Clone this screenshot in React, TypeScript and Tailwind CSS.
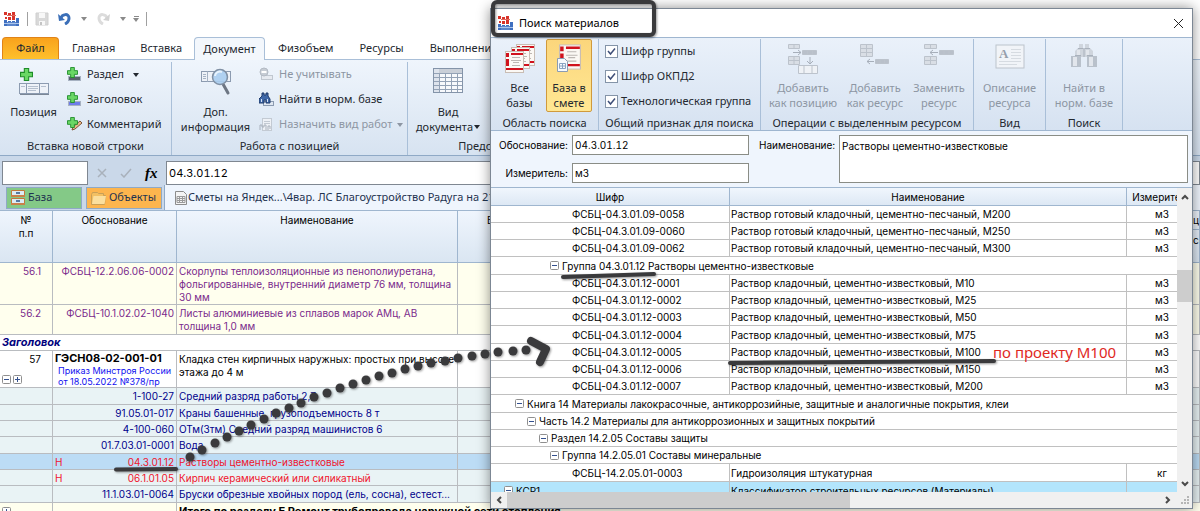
import type { ReactNode } from "react";
import { clsx } from "clsx";

type EstimateRow = {
  num?: string;
  mark?: string;
  code?: string;
  name: string;
  tone: string;
  height: string;
};

const accessoryRows: EstimateRow[] = [
  {
    num: "56.1",
    code: "ФСБЦ-12.2.06.06-0002",
    name: "Скорлупы теплоизоляционные из пенополиуретана, фольгированные, внутренний диаметр 76 мм, толщина 30 мм",
    tone: "bg-[#ffffee] text-[#7a2a8c]",
    height: "h-[42px]",
  },
  {
    num: "56.2",
    code: "ФСБЦ-10.1.02.02-1040",
    name: "Листы алюминиевые из сплавов марок АМц, АВ толщина 1,0 мм",
    tone: "bg-[#ffffee] text-[#7a2a8c]",
    height: "h-[30px]",
  },
];

const resourceTone = "bg-[#e9f3f5] text-[#00008b]";

const resourceRows: EstimateRow[] = [
  { code: "1-100-27", name: "Средний разряд работы 2,7", tone: resourceTone, height: "h-[17px]" },
  { code: "91.05.01-017", name: "Краны башенные, грузоподъемность 8 т", tone: resourceTone, height: "h-4" },
  { code: "4-100-060", name: "ОТм(Зтм) Средний разряд машинистов 6", tone: resourceTone, height: "h-4" },
  { code: "01.7.03.01-0001", name: "Вода", tone: resourceTone, height: "h-[17px]" },
  { mark: "Н", code: "04.3.01.12", name: "Растворы цементно-известковые", tone: "bg-[#bcdcf5] text-[#f0142c]", height: "h-4" },
  { mark: "Н", code: "06.1.01.05", name: "Кирпич керамический или силикатный", tone: "bg-[#e9f3f5] text-[#f0142c]", height: "h-4" },
  { code: "11.1.03.01-0064", name: "Бруски обрезные хвойных пород (ель, сосна), естест...", tone: resourceTone, height: "h-[17px]" },
];

type MaterialRow =
  | { kind: "item"; code: string; name: string; unit: string }
  | { kind: "group"; indent: string; text: string };

const materialRows: MaterialRow[] = [
  { kind: "item", code: "ФСБЦ-04.3.01.09-0058", name: "Раствор готовый кладочный, цементно-песчаный, М200", unit: "м3" },
  { kind: "item", code: "ФСБЦ-04.3.01.09-0060", name: "Раствор готовый кладочный, цементно-песчаный, М250", unit: "м3" },
  { kind: "item", code: "ФСБЦ-04.3.01.09-0062", name: "Раствор готовый кладочный, цементно-песчаный, М300", unit: "м3" },
  { kind: "group", indent: "pl-[59px]", text: "Группа 04.3.01.12 Растворы цементно-известковые" },
  { kind: "item", code: "ФСБЦ-04.3.01.12-0001", name: "Раствор кладочный, цементно-известковый, М10", unit: "м3" },
  { kind: "item", code: "ФСБЦ-04.3.01.12-0002", name: "Раствор кладочный, цементно-известковый, М25", unit: "м3" },
  { kind: "item", code: "ФСБЦ-04.3.01.12-0003", name: "Раствор кладочный, цементно-известковый, М50", unit: "м3" },
  { kind: "item", code: "ФСБЦ-04.3.01.12-0004", name: "Раствор кладочный, цементно-известковый, М75", unit: "м3" },
  { kind: "item", code: "ФСБЦ-04.3.01.12-0005", name: "Раствор кладочный, цементно-известковый, М100", unit: "м3" },
  { kind: "item", code: "ФСБЦ-04.3.01.12-0006", name: "Раствор кладочный, цементно-известковый, М150", unit: "м3" },
  { kind: "item", code: "ФСБЦ-04.3.01.12-0007", name: "Раствор кладочный, цементно-известковый, М200", unit: "м3" },
  { kind: "group", indent: "pl-6", text: "Книга 14 Материалы лакокрасочные, антикоррозийные, защитные и аналогичные покрытия, клеи" },
  { kind: "group", indent: "pl-9", text: "Часть 14.2 Материалы для антикоррозионных и защитных покрытий" },
  { kind: "group", indent: "pl-12", text: "Раздел 14.2.05 Составы защиты" },
  { kind: "group", indent: "pl-[59px]", text: "Группа 14.2.05.01 Составы минеральные" },
  { kind: "item", code: "ФСБЦ-14.2.05.01-0003", name: "Гидроизоляция штукатурная", unit: "кг" },
];

// Centres of the dots that make up the curved arrow
const arrowDots = [
  [190, 457], [202, 450], [215, 443], [227, 437], [239, 431], [251, 425], [264, 419],
  [276, 413], [289, 408], [301, 403], [314, 397], [327, 393], [340, 388], [353, 384],
  [366, 380], [379, 376], [392, 373], [405, 369], [418, 366], [431, 363], [445, 361],
  [458, 358], [472, 356], [485, 354], [498, 352], [513, 351], [526, 350],
];

/* ---------- icons ---------- */

function AppIcon() {
  return (
    <svg width="16" height="14" viewBox="0 0 16 14">
      <path d="M0 8h3v6H0zM4 9h3v5H4zM8 9h3v5H8zM12 6h3v8h-3z" fill="#3f6fc0" />
      <path d="M3 10h9v4H3z" fill="#5c86cc" />
      <path d="M0 11h15v1H0z" fill="#a9c4ea" />
      <path d="M0 0h3v3H0zM4 1h3v3H4zM8 0h3v3H8zM1 5h2v2H1zM4 5h3v3H4zM8 4h3v4H8z" fill="#d8342a" />
      <path d="M3 3h9v1H3z" fill="#e0655a" />
    </svg>
  );
}

function SaveIcon() {
  return (
    <svg width="14" height="14" viewBox="0 0 14 14">
      <path d="M1 1h12v12H1z" fill="#d9d9d9" stroke="#cfcfcf" />
      <path d="M4 1h6v5H4zM4 9h6v4H4z" fill="#f8f8f8" />
      <path d="M5 10h2v3H5z" fill="#c4c4c4" />
    </svg>
  );
}

function UndoIcon({ muted }: { muted?: boolean }) {
  return (
    <svg width="13" height="13" viewBox="0 0 13 13" className={muted ? "-scale-x-100" : ""}>
      <path d="M3 6c1-4 8-5 8 0 0 3-2 5-4 6" fill="none" stroke={muted ? "#dcdcdc" : "#3b6fb8"} strokeWidth="3" />
      <path d="M0 2l1 7 6-1z" fill={muted ? "#d2d2d2" : "#3b6fb8"} />
    </svg>
  );
}

function Caret({ className }: { className?: string }) {
  return (
    <svg width="6" height="4" viewBox="0 0 6 4" className={className}>
      <path d="M0 0h6L3 4z" fill="currentColor" />
    </svg>
  );
}

function GreenPlus({ x = 0, y = 0, size = 10 }: { x?: number; y?: number; size?: number }) {
  return (
    <svg x={x} y={y} width={size} height={size} viewBox="0 0 12 12">
      <path d="M4 .5h4V4h3.500v4H8v3.500H4V8H.5V4H4z" fill="#6ad765" stroke="#1e8c28" />
    </svg>
  );
}

function PositionIcon() {
  return (
    <svg width="30" height="28" viewBox="0 0 30 28">
      <GreenPlus x={1} y={0} size={13} />
      <rect x="0.5" y="15.500" width="29" height="10" fill="#eef2f8" stroke="#8c9bb0" />
      <path d="M7.500 15.500v10M20.500 15.500v10" stroke="#8c9bb0" />
      <path d="M2 18.500h4M9 18.500h10M9 20.500h10M9 22.500h8M22 18.500h5" stroke="#b4bfce" />
      <path d="M1 26.500h29" stroke="#7b8796" />
    </svg>
  );
}

function InsertIcon({ kind }: { kind: "section" | "title" | "comment" }) {
  return (
    <svg width="15" height="15" viewBox="0 0 15 15">
      {kind === "comment" ? (
        <path d="M5 13l1-3 7-6 2 2-7 6z" fill="#e9b98a" stroke="#7a5638" />
      ) : (
        <rect x="1.500" y="9.500" width="12" height="4" fill={kind === "title" ? "#6f7dea" : "#59616d"} stroke="#a7b2c2" />
      )}
      <GreenPlus size={11} />
    </svg>
  );
}

function InfoIcon() {
  return (
    <svg width="30" height="28" viewBox="0 0 30 28">
      <rect x="0.5" y="3.500" width="29" height="10" fill="#eef2f8" stroke="#8c9bb0" />
      <path d="M6.500 3.500v10M25.500 3.500v10M2 6.500h3M2 8.500h3M2 10.500h3" stroke="#a6b3c4" />
      <path d="M22 16l5 9" stroke="#6d7683" strokeWidth="3" strokeLinecap="round" />
      <circle cx="19" cy="9" r="7.500" fill="#a9cdf0" fillOpacity="0.9" stroke="#8090a4" strokeWidth="1.500" />
      <path d="M14 8a5 5 0 0 1 7-4" stroke="#e8f3fd" strokeWidth="2" fill="none" />
    </svg>
  );
}

function SkipIcon() {
  return (
    <svg width="15" height="15" viewBox="0 0 15 15">
      <rect x="2.500" y="8.500" width="11" height="4" fill="#e6eaf0" stroke="#c0c7d0" />
      <circle cx="5" cy="5" r="4" fill="#c6ccd4" stroke="#b3bac4" />
      <path d="M2.500 5h5" stroke="#fff" strokeWidth="2" />
    </svg>
  );
}

function BinocularsIcon() {
  return (
    <svg width="26" height="24" viewBox="0 0 26 24">
      <path d="M8 0h4v4h1v9H4V7l3-3h1zM18 0h-4v4h-1v9h9V7l-3-3h-1z" fill="#cfd5dd" />
      <path d="M0 12h10v11H0zM16 12h10v11H16z" fill="#b9c1cb" />
      <path d="M2 13h4v9H2zM18 13h4v9h-4zM6 6h3v5H6zM15 6h3v5h-3z" fill="#e2e6ec" />
      <path d="M4 11.500h6M16 11.500h6M7 4.500h5M14 4.500h5M13 4v9" stroke="#a9b1bc" />
    </svg>
  );
}

function FindNormIcon() {
  return (
    <svg width="15" height="15" viewBox="0 0 15 15">
      <rect x="4.500" y="9.500" width="10" height="4" fill="#dfe7f1" stroke="#8a9ab0" />
      <path d="M3 1h2v2h2V1h2v3l2 3v4H7V8H5v3H0V7l3-3z" fill="#3f68a8" stroke="#1f3a6b" />
      <path d="M2.500 7v3M8.500 7v3" stroke="#d3e1f4" />
    </svg>
  );
}

function WorkKindIcon() {
  return (
    <svg width="15" height="15" viewBox="0 0 15 15">
      <rect x="3.500" y="1.500" width="9" height="12" fill="#eef1f6" stroke="#c3cad3" />
      <path d="M5 4.500h6M5 6.500h6" stroke="#c3cad3" />
      <path d="M1 13V8h2v2h2V8h2v5M9 13V9h2v3" stroke="#a9b1bc" fill="none" />
    </svg>
  );
}

function GridIcon() {
  return (
    <svg width="30" height="26" viewBox="0 0 30 26" shapeRendering="crispEdges">
      <rect x="0.5" y="0.5" width="29" height="24" fill="#f7f9fc" stroke="#8494a9" />
      <rect x="1" y="1" width="28" height="4" fill="#c9cfd8" />
      <rect x="1" y="1" width="5" height="23" fill="#dde3ec" />
      <path d="M1 5.500h28M1 9.500h28M1 13.500h28M1 17.500h28M1 21.500h28M6.500 5v19M12.500 5v19M18.500 5v19M24.500 5v19" stroke="#93a2b6" />
    </svg>
  );
}

function Book({ x, y }: { x: number; y: number }) {
  return (
    <svg x={x} y={y} width="19" height="22" viewBox="0 0 19 22">
      <rect x="0.5" y="0.5" width="18" height="21" fill="#fbf8f4" stroke="#c9bdb4" />
      <path d="M1 2h3v4H1zM1 17h17v2H1zM6 2h12v2H6zM1 8h3v7H1z" fill="#d0121d" />
      <path d="M7 6.500h8M6 9.500h10M8 11.500h6M7 14.500h8" stroke="#bdb7b3" />
    </svg>
  );
}

function AllBasesIcon() {
  return (
    <svg width="30" height="30" viewBox="0 0 30 30">
      <Book x={11} y={0} />
      <Book x={6} y={3} />
      <Book x={0} y={7} />
    </svg>
  );
}

function EstimateBaseIcon() {
  return (
    <svg width="24" height="28" viewBox="0 0 24 28">
      <svg x="2" y="0" width="22" height="26" viewBox="0 0 19 22">
        <Book x={0} y={0} />
      </svg>
      <path d="M.5 14.500h7l3 3v10H.5z" fill="#f7fafd" stroke="#8a9cb3" />
      <path d="M2.500 19.500h6v5h-6zM5.500 19.500v5M2.500 22h6" fill="none" stroke="#8aa4c2" />
    </svg>
  );
}

function AddPositionIcon() {
  return (
    <svg width="30" height="30" viewBox="0 0 30 30" fill="#d9dee5" stroke="#bcc3cc">
      <path d="M.5.5h11v4H.5zM6 .5v4M.5 12.500h11v8H.5zM6 12.500v8M.5 16.500h11" />
      <path d="M14.500 6.500h14v4h-14zM19.500 6.500v4M24.500 6.500v4" fill="#b9c0ca" />
      <path d="M5 8.500h8M10 6l3 2.500L10 11M22 13v6M19 17l3 3 3-3" fill="none" stroke="#a7afba" />
      <path d="M10.500 21.500h19v8h-19zM16 21.500v8M24 21.500v8" fill="#eff2f6" />
    </svg>
  );
}

function AddResourceIcon() {
  return (
    <svg width="30" height="30" viewBox="0 0 30 30" fill="#d9dee5" stroke="#bcc3cc">
      <path d="M.5.5h12v12H.5zM6.500.5v12M.5 4.500h12M.5 8.500h12" />
      <path d="M15.500 15.500h13v4h-13zM20 15.500v4M24.500 15.500v4" fill="#b9c0ca" />
      <path d="M14 17.500H7M10 15l-3 2.500L10 20" fill="none" stroke="#a7afba" />
    </svg>
  );
}

function ReplaceResourceIcon() {
  return (
    <svg width="30" height="30" viewBox="0 0 30 30" fill="#d9dee5" stroke="#bcc3cc">
      <path d="M.5.5h12v4H.5zM6.500.5v4M.5 12.500h12v8H.5zM6.500 12.500v8M.5 16.500h12" />
      <path d="M15.500 6.500h14v4h-14zM20 6.500v4M25 6.500v4" fill="#b9c0ca" />
      <path d="M14 8.500H6M9 6L6 8.500 9 11" fill="none" stroke="#a7afba" />
    </svg>
  );
}

function DescriptionIcon() {
  return (
    <svg width="30" height="26" viewBox="0 0 30 26">
      <rect x="1" y="1" width="28" height="23" fill="#f1f4f8" stroke="#bcc3cc" />
      <path d="M16 5.500h10M16 8.500h10M16 11.500h10M16 14.500h10M4 17.500h22M4 20.500h18" stroke="#d6dbe1" />
      <text x="4" y="14" className="font-['Liberation_Serif'] text-[13px] font-bold" fill="#969fab">A</text>
    </svg>
  );
}

function CabinetIcon() {
  return (
    <svg width="14" height="15" viewBox="0 0 14 15">
      <path d="M.5.5h13v6H.5zM.5 8.500h13v6H.5z" fill="#dcebf5" stroke="#c07a3c" />
      <path d="M0 5h14v2H0zM0 13h14v2H0z" fill="#c9814a" />
      <path d="M5 3h4M5 11h4" stroke="#5779a0" strokeWidth="2" />
    </svg>
  );
}

function FolderIcon() {
  return (
    <svg width="15" height="14" viewBox="0 0 15 14">
      <path d="M.5 3.500l1-2h5l1 1h5v2h2l-1 9H.5z" fill="#f3c063" stroke="#c9a057" />
      <path d="M1 13L2.500 5H15l-1.500 8z" fill="#fbdf9e" />
    </svg>
  );
}

function SheetIcon() {
  return (
    <svg width="12" height="14" viewBox="0 0 12 14">
      <path d="M.5.5h8l3 3v10H.5z" fill="#f4f4f4" stroke="#8c8c8c" />
      <path d="M2 5.500h8v6H2zM2 7.500h8M2 9.500h8M4.500 5v7M7.500 5v7" fill="none" stroke="#9a9a9a" />
    </svg>
  );
}

function TreeToggle({ open }: { open?: boolean }) {
  return (
    <svg width="9" height="9" viewBox="0 0 9 9" className="shrink-0">
      <rect x="0.5" y="0.5" width="8" height="8" rx="1" fill="#fff" stroke="#8f8f8f" />
      <path d={open ? "M2 4.500h5" : "M2 4.500h5M4.500 2v5"} stroke="#33508f" />
    </svg>
  );
}

function Chevron({ className }: { className?: string }) {
  return (
    <svg width="8" height="6" viewBox="0 0 8 6" className={className}>
      <path d="M1 5l3-3 3 3" fill="none" stroke="#4a4a4a" strokeWidth="2" />
    </svg>
  );
}

/* ---------- ribbon ---------- */

function RibbonGroup({ title, className, children }: { title: string; className: string; children?: ReactNode }) {
  return (
    <section
      className={clsx(
        "flex shrink-0 flex-col border-r border-[#a9bfd8] text-center text-[11px] whitespace-nowrap",
        className,
      )}
    >
      <div className="flex h-[75px] shrink-0 items-start">{children}</div>
      <h2 className="leading-[17px] text-[#23282f]">{title}</h2>
    </section>
  );
}

function BigButton({
  icon,
  lines,
  className,
  disabled,
  caret,
}: {
  icon: ReactNode;
  lines: string[];
  className: string;
  disabled?: boolean;
  caret?: boolean;
}) {
  return (
    <button
      disabled={disabled}
      className={clsx(
        "flex h-[73px] shrink-0 flex-col items-center leading-[15px]",
        disabled ? "text-[#8d96a3]" : "text-[#23282f]",
        className,
      )}
    >
      <span className="flex h-10 items-start pt-1">{icon}</span>
      {lines.map((line, i) => (
        <span key={line} className="flex items-center gap-px">
          {line}
          {caret && i === lines.length - 1 && <Caret />}
        </span>
      ))}
    </button>
  );
}

function SmallButton({ icon, label, disabled, caret }: { icon: ReactNode; label: string; disabled?: boolean; caret?: string }) {
  return (
    <button
      disabled={disabled}
      className={clsx("flex h-[25px] items-center gap-[5px]", disabled ? "text-[#8d96a3]" : "text-[#23282f]")}
    >
      {icon}
      {label}
      {caret && <Caret className={caret} />}
    </button>
  );
}

function CheckRow({ label }: { label: string }) {
  return (
    <label className="flex h-[25px] items-center gap-[3px] text-[#23282f]">
      <span className="grid">
        <input
          type="checkbox"
          defaultChecked
          className="peer col-start-1 row-start-1 size-[13px] appearance-none border border-[#8494a8] bg-white"
        />
        <svg
          viewBox="0 0 13 13"
          className="pointer-events-none invisible col-start-1 row-start-1 size-[13px] peer-checked:visible"
        >
          <path d="M3 6l2.500 3L10 3.500" fill="none" stroke="#3f4f78" strokeWidth="1.500" />
        </svg>
      </span>
      {label}
    </label>
  );
}

/* ---------- main window ---------- */

function TitleBar() {
  return (
    <header className="flex h-[37px] items-center gap-[7px] bg-white pl-1 text-[#8a8a8a]">
      <AppIcon />
      <span className="h-[14px] w-px bg-[#a0a0a0]" />
      <button aria-label="Сохранить" disabled>
        <SaveIcon />
      </button>
      <button aria-label="Отменить" className="flex items-center gap-[10px] pl-[2px]">
        <UndoIcon />
        <Caret />
      </button>
      <button aria-label="Вернуть" disabled className="flex items-center gap-[10px] pl-[3px]">
        <UndoIcon muted />
        <Caret />
      </button>
      <button aria-label="Настройка панели" className="flex flex-col items-center gap-px">
        <span className="h-px w-[5px] bg-current" />
        <Caret />
      </button>
      <span className="h-[14px] w-px bg-[#a0a0a0]" />
    </header>
  );
}

function MainTabs() {
  const tab = "h-[22px] px-[13px]";
  return (
    <nav className="flex h-[23px] border-b border-[#a9bfd8] bg-white pl-[2px] text-[11px] whitespace-nowrap text-[#23282f]">
      <button className="h-[22px] w-[57px] rounded-t-sm border border-b-0 border-[#e08318] bg-linear-to-b from-[#f9a21c] to-[#fdc02c]">
        Файл
      </button>
      <button className={tab}>Главная</button>
      <button className="h-[22px] px-3">Вставка</button>
      <button className="h-[23px] w-[71px] rounded-t-sm border border-b-0 border-[#a9bfd8] bg-[#f3f7fc]">Документ</button>
      <button className={tab}>Физобъем</button>
      <button className={tab}>Ресурсы</button>
      <button className={tab}>Выполнение</button>
    </nav>
  );
}

function MainRibbon() {
  return (
    <div className="flex h-[96px] overflow-hidden border-b border-[#8fa9c6] bg-linear-to-b from-[#eff5fc] to-[#d7e3f1] pt-[2px]">
      <RibbonGroup title="Вставка новой строки" className="w-[172px]">
        <BigButton icon={<PositionIcon />} lines={["Позиция"]} className="w-[67px] pt-[2px]" />
        <div>
          <SmallButton icon={<InsertIcon kind="section" />} label="Раздел" caret="ml-1" />
          <SmallButton icon={<InsertIcon kind="title" />} label="Заголовок" />
          <SmallButton icon={<InsertIcon kind="comment" />} label="Комментарий" />
        </div>
      </RibbonGroup>
      <RibbonGroup title="Работа с позицией" className="w-[236px]">
        <BigButton icon={<InfoIcon />} lines={["Доп.", "информация"]} className="w-[87px] pt-[2px]" />
        <div>
          <SmallButton disabled icon={<SkipIcon />} label="Не учитывать" />
          <SmallButton icon={<FindNormIcon />} label="Найти в норм. базе" />
          <SmallButton disabled icon={<WorkKindIcon />} label="Назначить вид работ" caret="ml-0" />
        </div>
      </RibbonGroup>
      <RibbonGroup title="Представление" className="w-[184px]">
        <BigButton icon={<GridIcon />} lines={["Вид", "документа"]} caret className="w-20 pt-[2px]" />
      </RibbonGroup>
    </div>
  );
}

function FormulaBar() {
  return (
    <div className="flex h-[29px] items-end bg-[#cad8e9] pl-[2px]">
      <input aria-label="Ячейка" className="h-6 w-[86px] border border-[#7f8791] bg-white px-1" />
      <div className="flex h-6 w-[78px] items-center justify-around px-[2px]">
        <button aria-label="Отмена" disabled>
          <svg width="10" height="10" viewBox="0 0 10 10">
            <path d="M1 1l8 8M9 1L1 9" stroke="#a9b1bb" strokeWidth="1.500" />
          </svg>
        </button>
        <button aria-label="Ввод" disabled>
          <svg width="12" height="10" viewBox="0 0 12 10">
            <path d="M1 6l3 3 7-8" fill="none" stroke="#a9b1bb" strokeWidth="1.500" />
          </svg>
        </button>
        <button className="font-['Liberation_Serif',serif] text-[15px] leading-4 font-bold italic">fx</button>
      </div>
      <input
        aria-label="Значение"
        defaultValue="04.3.01.12"
        className="h-6 min-w-0 flex-1 border border-[#7f8791] bg-white px-[2px] font-['Inter',sans-serif] text-[11px] tabular-nums"
      />
    </div>
  );
}

function DocumentTabs() {
  const tab = "flex h-[22px] items-center gap-[3px] border border-[#8fa9c6] pl-1";
  return (
    <nav className="flex h-[25px] items-center bg-[#cad8e9] pl-[6px] text-[11px] whitespace-nowrap text-[#1f3350]">
      <button className={clsx(tab, "w-[76px] bg-[#84c987]")}>
        <CabinetIcon />
        База
      </button>
      <button className={clsx(tab, "ml-1 w-[76px] bg-[#fdb54e]")}>
        <FolderIcon />
        Объекты
      </button>
      <button className="ml-[2px] flex h-[25px] flex-1 items-center gap-px border-l border-[#8fa9c6] bg-[#eff5fd] pl-[10px]">
        <SheetIcon />
        Сметы на Яндек...\4вар. ЛС Благоустройство Радуга на 21
      </button>
    </nav>
  );
}

function EstimateTable() {
  const cell = "border-r border-b border-[#b9bcc0] px-[2px] align-top overflow-hidden";
  const head = "border-r border-b border-[#9fb6cf] bg-linear-to-b from-[#eff5fd] to-[#dae6f2] pt-[3px] align-top font-normal overflow-hidden";
  return (
    <table className="w-full table-fixed border-separate border-spacing-0 border-t border-[#9fb6cf] font-['Inter',sans-serif] text-[10px] leading-[13px]">
      <colgroup>
        <col className="w-[53px]" />
        <col className="w-[124px]" />
        <col className="w-[281px]" />
        <col />
        <col className="w-[7px]" />
      </colgroup>
      <thead>
        <tr className="h-[52px]">
          <th className={head}>
            №<br />
            п.п
          </th>
          <th className={head}>Обоснование</th>
          <th className={head}>Наименование</th>
          <th className={clsx(head, "pl-[29px] text-left")}>Ед. изм.</th>
          <th className={head}>
            <div className="h-4 border-b border-[#9fb6cf]">це</div>
            <div className="pt-1">се</div>
          </th>
        </tr>
      </thead>
      <tbody>
        {accessoryRows.map((row) => (
          <tr key={row.num} className={clsx(row.height, row.tone)}>
            <td className={clsx(cell, "pt-[2px] pr-[11px] text-right")}>{row.num}</td>
            <td className={clsx(cell, "pt-[2px] text-right whitespace-nowrap")}>{row.code}</td>
            <td className={clsx(cell, "pt-[2px]")}>{row.name}</td>
            <td className={cell} />
            <td className={cell} />
          </tr>
        ))}
        <tr className="h-4 bg-white">
          <td colSpan={5} className="border-b border-[#b9bcc0] pl-[2px] text-[11px] leading-[15px] font-bold text-[#00007c] italic">
            Заголовок
          </td>
        </tr>
        <tr className="h-[37px] bg-white">
          <td className={cell}>
            <div className="pt-[2px] pr-[9px] text-right">57</div>
            <div className="flex gap-[2px] pt-[9px]">
              <TreeToggle open />
              <TreeToggle />
            </div>
          </td>
          <td className={clsx(cell, "whitespace-nowrap")}>
            <div className="pt-px text-[11px] font-bold">ГЭСН08-02-001-01</div>
            <div className="pl-[3px] text-[9px] leading-[11px] text-[#1010f0]">
              Приказ Минстроя России
              <br />
              от 18.05.2022 №378/пр
            </div>
          </td>
          <td className={clsx(cell, "pt-[2px]")}>Кладка стен кирпичных наружных: простых при высоте этажа до 4 м</td>
          <td className={cell} />
          <td className={cell} />
        </tr>
        {resourceRows.map((row) => (
          <tr key={row.code} className={clsx(row.height, row.tone)}>
            <td className={cell} />
            <td className={clsx(cell, "pt-[2px]")}>
              <div className="flex justify-between">
                <span>{row.mark}</span>
                {row.code}
              </div>
            </td>
            <td className={clsx(cell, "pt-[2px] whitespace-nowrap")}>{row.name}</td>
            <td className={cell} />
            <td className={cell} />
          </tr>
        ))}
        <tr className="h-[30px] bg-[#ffffee] text-[11px] font-bold">
          <td className={clsx(cell, "pt-1")}>
            <TreeToggle />
          </td>
          <td className={cell} />
          <td colSpan={3} className="border-b border-[#b9bcc0] px-[2px] pt-[2px] align-top">
            Итого по разделу Е Ремонт трубопровода наружной сети отопления
          </td>
        </tr>
      </tbody>
    </table>
  );
}

/* ---------- search dialog ---------- */

function DialogRibbon() {
  return (
    <div className="flex h-[94px] shrink-0 overflow-hidden border-y border-[#9fb6d0] bg-linear-to-b from-[#eaf1fa] to-[#d6e2f1] pt-px">
      <RibbonGroup title="Область поиска" className="w-[108px]">
        <BigButton icon={<AllBasesIcon />} lines={["Все", "базы"]} className="ml-[2px] w-[53px] pt-px" />
        <BigButton
          icon={<EstimateBaseIcon />}
          lines={["База в", "смете"]}
          className="w-[46px] rounded-xs border border-[#d09a3c] bg-linear-to-b from-[#fbd67c] to-[#ffe793]"
        />
      </RibbonGroup>
      <RibbonGroup title="Общий признак для поиска" className="w-[162px]">
        <div className="pl-[6px]">
          <CheckRow label="Шифр группы" />
          <CheckRow label="Шифр ОКПД2" />
          <CheckRow label="Технологическая группа" />
        </div>
      </RibbonGroup>
      <RibbonGroup title="Операции с выделенным ресурсом" className="w-[213px]">
        <BigButton disabled icon={<AddPositionIcon />} lines={["Добавить", "как позицию"]} className="ml-1 w-[76px] pt-px" />
        <BigButton disabled icon={<AddResourceIcon />} lines={["Добавить", "как ресурс"]} className="w-[68px] pt-px" />
        <BigButton disabled icon={<ReplaceResourceIcon />} lines={["Заменить", "ресурс"]} className="w-[60px] pt-px" />
      </RibbonGroup>
      <RibbonGroup title="Вид" className="w-[72px]">
        <BigButton disabled icon={<DescriptionIcon />} lines={["Описание", "ресурса"]} className="w-full pt-px" />
      </RibbonGroup>
      <RibbonGroup title="Поиск" className="w-[77px]">
        <BigButton disabled icon={<BinocularsIcon />} lines={["Найти в", "норм. базе"]} className="w-full pt-px" />
      </RibbonGroup>
    </div>
  );
}

function SearchForm() {
  const field = "h-5 border border-[#8a8d86] bg-white px-[2px] tabular-nums";
  return (
    <form className="flex h-[56px] shrink-0 gap-[5px] bg-[#eff5fd] px-1 pt-1 font-['Inter',sans-serif] text-[10px] leading-[13px]">
      <div className="grid grid-cols-[73px_177px] content-start items-center gap-x-1 gap-y-2 text-right">
        <label htmlFor="basis">Обоснование:</label>
        <input id="basis" defaultValue="04.3.01.12" className={field} />
        <label htmlFor="unit">Измеритель:</label>
        <input id="unit" defaultValue="м3" className={field} />
      </div>
      <label htmlFor="title" className="ml-[5px] w-[75px] pt-1 text-right whitespace-nowrap">
        Наименование:
      </label>
      <textarea
        id="title"
        defaultValue="Растворы цементно-известковые"
        className="h-12 min-w-0 flex-1 resize-none border border-[#8a8d86] bg-white px-[2px] pt-1"
      />
    </form>
  );
}

function MaterialTable() {
  const cell = "border-b border-[#c0c0c0] p-0 whitespace-nowrap overflow-hidden";
  const head = "border-b border-[#9fb6cf] bg-linear-to-b from-[#f0f6fd] to-[#dde8f4] p-0 font-normal";
  return (
    <table className="w-[calc(100%+20px)] table-fixed border-separate border-spacing-0 font-['Inter',sans-serif] text-[10px] leading-4">
      <colgroup>
        <col className="w-[239px]" />
        <col />
        <col className="w-[70px]" />
      </colgroup>
      <thead>
        <tr className="h-[18px]">
          <th className={clsx(head, "border-r")}>Шифр</th>
          <th className={clsx(head, "border-r")}>Наименование</th>
          <th className={head}>Измеритель</th>
        </tr>
      </thead>
      <tbody className="bg-white">
        {materialRows.map((row) =>
          row.kind === "group" ? (
            <tr key={row.text} className="h-[17px] nth-[4n]:h-[18px]">
              <td colSpan={3} className={cell}>
                <div className={clsx("flex items-center gap-[3px]", row.indent)}>
                  <TreeToggle open />
                  {row.text}
                </div>
              </td>
            </tr>
          ) : (
            <tr key={row.code} className="h-[17px] nth-[4n]:h-[18px]">
              <td className={clsx(cell, "border-r pl-[81px]")}>{row.code}</td>
              <td className={clsx(cell, "border-r pl-px")}>{row.name}</td>
              <td className={clsx(cell, "text-center")}>{row.unit}</td>
            </tr>
          ),
        )}
        <tr className="h-[18px] bg-[#b3e5fc]">
          <td className={clsx(cell, "border-r")}>
            <div className="flex items-center gap-[3px] pl-[13px]">
              <TreeToggle open />
              КСР1
            </div>
          </td>
          <td className={clsx(cell, "border-r pl-px")}>Классификатор строительных ресурсов (Материалы)</td>
          <td className={cell} />
        </tr>
      </tbody>
    </table>
  );
}

function SearchDialog() {
  return (
    <div
      role="dialog"
      aria-labelledby="dialog-title"
      className="absolute top-2 right-[7px] bottom-[2px] left-[490px] flex flex-col border border-[#7c8794] bg-white shadow-[0_0_12px_rgba(0,0,0,0.45)]"
    >
      <header className="flex h-7 shrink-0 items-center gap-[5px] bg-white pr-2 pl-[7px] text-[11px]">
        <AppIcon />
        <h1 id="dialog-title" className="flex-1">
          Поиск материалов
        </h1>
        <button aria-label="Закрыть">
          <svg width="11" height="11" viewBox="0 0 11 11">
            <path d="M1 1l9 9M10 1l-9 9" stroke="#222" />
          </svg>
        </button>
      </header>
      <DialogRibbon />
      <SearchForm />
      <div className="flex min-h-0 flex-1 border-t border-[#9fb6cf]">
        <div className="min-w-0 flex-1 overflow-hidden">
          <MaterialTable />
        </div>
        <div className="flex w-[15px] flex-col items-center bg-[#f0f0f0]">
          <button aria-label="Вверх" className="flex h-[17px] items-center">
            <Chevron />
          </button>
          <div className="mt-[65px] h-8 w-full bg-[#cdcdcd]" />
          <button aria-label="Вниз" className="mt-auto flex h-[17px] items-center">
            <Chevron className="rotate-180" />
          </button>
        </div>
      </div>
      <div className="flex h-4 shrink-0 items-center bg-[#f0f0f0]">
        <button aria-label="Влево" className="flex w-4 justify-center">
          <Chevron className="-rotate-90" />
        </button>
        <div className="h-full w-[49%] bg-[#cdcdcd]" />
        <button aria-label="Вправо" className="mr-[3px] ml-auto flex w-4 justify-center">
          <Chevron className="rotate-90" />
        </button>
        <svg width="12" height="12" viewBox="0 0 12 12" className="mr-px">
          <path d="M8 2h2v2H8zM5 5h2v2H5zM8 5h2v2H8zM2 8h2v2H2zM5 8h2v2H5zM8 8h2v2H8z" fill="#b5b5b5" />
        </svg>
      </div>
    </div>
  );
}

/* ---------- hand-made marks over both windows ---------- */

function Annotations() {
  return (
    <>
      <svg
        width="1200"
        height="511"
        viewBox="0 0 1200 511"
        className="pointer-events-none absolute top-0 left-0 drop-shadow-[1px_1px_1px_rgba(0,0,0,0.4)]"
        fill="none"
        stroke="#3a3a3c"
        strokeLinecap="round"
        strokeLinejoin="round"
      >
        <rect x="493" y="2" width="161" height="33" rx="4" strokeWidth="4" />
        <path d="M116 469.500L176 469" strokeWidth="4" />
        <path d="M563 277L654 274" strokeWidth="4" />
        <path d="M730 363L994 361" strokeWidth="4" />
        <path d="M531 341L546 349L540 362" strokeWidth="8" />
        {arrowDots.map(([x, y]) => (
          <circle key={x} cx={x} cy={y} r="4.500" fill="#3a3a3c" stroke="none" />
        ))}
      </svg>
      <p className="pointer-events-none absolute top-[342px] left-[993px] text-[15px] leading-5 whitespace-nowrap text-[#e0281e]">
        по проекту М100
      </p>
    </>
  );
}

export default function App() {
  return (
    <div className="relative h-screen overflow-hidden bg-[#ffffee] font-['Noto_Sans',sans-serif] text-black">
      <TitleBar />
      <MainTabs />
      <MainRibbon />
      <FormulaBar />
      <DocumentTabs />
      <EstimateTable />
      <SearchDialog />
      <Annotations />
    </div>
  );
}
